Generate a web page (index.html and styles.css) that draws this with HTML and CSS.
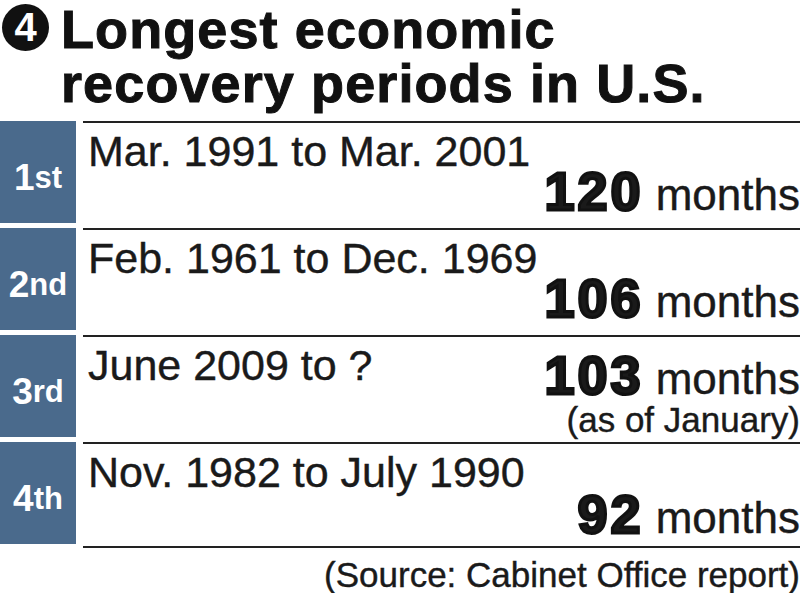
FILE: index.html
```html
<!DOCTYPE html>
<html lang="en">
<head>
    <meta charset="UTF-8">
    <meta name="viewport" content="width=device-width, initial-scale=1.0">
    <title>Longest economic recovery periods in U.S.</title>
    <link rel="stylesheet" href="styles.css">
</head>
<body>
    <div class="chart">
        <div class="chart-header">
            <div class="badge">4</div>
            <h1>Longest economic<br>recovery periods in U.S.</h1>
        </div>

        <div class="rows">
            <div class="row">
                <div class="rank">1<span>st</span></div>
                <div class="period">
                    <div class="dates">Mar. 1991 to Mar. 2001</div>
                    <div class="length"><b>120</b> months</div>
                </div>
            </div>
            <div class="row">
                <div class="rank">2<span>nd</span></div>
                <div class="period">
                    <div class="dates">Feb. 1961 to Dec. 1969</div>
                    <div class="length"><b>106</b> months</div>
                </div>
            </div>
            <div class="row">
                <div class="rank">3<span>rd</span></div>
                <div class="period">
                    <div class="dates">June 2009 to ?</div>
                    <div class="length">
                        <b>103</b> months
                        <div class="note">(as of January)</div>
                    </div>
                </div>
            </div>
            <div class="row">
                <div class="rank">4<span>th</span></div>
                <div class="period last">
                    <div class="dates">Nov. 1982 to July 1990</div>
                    <div class="length"><b>92</b> months</div>
                </div>
            </div>
        </div>

        <div class="source">(Source: Cabinet Office report)</div>
    </div>
</body>
</html>
```

FILE: styles.css
```css
* {
    box-sizing: border-box;
    margin: 0;
    padding: 0;
}

body {
    background-color: #fff;
    font-family: 'Liberation Sans', Arial, sans-serif;
    color: #1a1a1a;
    width: 800px;
    overflow: hidden;
    -webkit-text-stroke: 0.4px #1a1a1a;
}

.chart-header {
    display: flex;
    align-items: flex-start;
    gap: 12px;
    padding-top: 2px;
    margin-bottom: 11px;
}

.badge {
    flex: none;
    width: 47px;
    height: 47px;
    margin: 2px 0 0 2px;
    border-radius: 50%;
    background-color: #111;
    color: #fff;
    font-size: 40px;
    font-weight: bold;
    line-height: 47px;
    text-align: center;
    -webkit-text-stroke: 0;
}

h1 {
    font-size: 54px;
    line-height: 54px;
    font-weight: bold;
    color: #111;
    letter-spacing: 1.1px;
    -webkit-text-stroke: 1px #111;
}

.row {
    display: grid;
    grid-template-columns: 76px 1fr;
    column-gap: 7px;
    height: 102px;
    margin-bottom: 5px;
}

.rank {
    background-color: #4a6a8c;
    color: #fff;
    font-size: 37px;
    font-weight: bold;
    display: flex;
    align-items: center;
    justify-content: center;
    padding-top: 12px;
    -webkit-text-stroke: 0;
}

.rank span {
    font-size: 31px;
}

.period {
    display: grid;
    grid-template-areas: "cell";
    border-top: 2px solid #222;
    padding: 6px 0 2px 5px;
}

.period.last {
    border-bottom: 2px solid #222;
    margin-bottom: -4px;
}

.dates,
.length {
    grid-area: cell;
}

.dates {
    align-self: start;
    font-size: 43px;
    line-height: 44px;
}

.length {
    align-self: end;
    justify-self: end;
    text-align: right;
    font-size: 44px;
    line-height: 52px;
}

.length b {
    font-size: 54px;
    -webkit-text-stroke: 3px #111;
    letter-spacing: 3px;
}

.note {
    font-size: 35px;
    line-height: 30px;
}

.source {
    text-align: right;
    font-size: 35px;
    line-height: 38px;
    padding-top: 7px;
}
```
